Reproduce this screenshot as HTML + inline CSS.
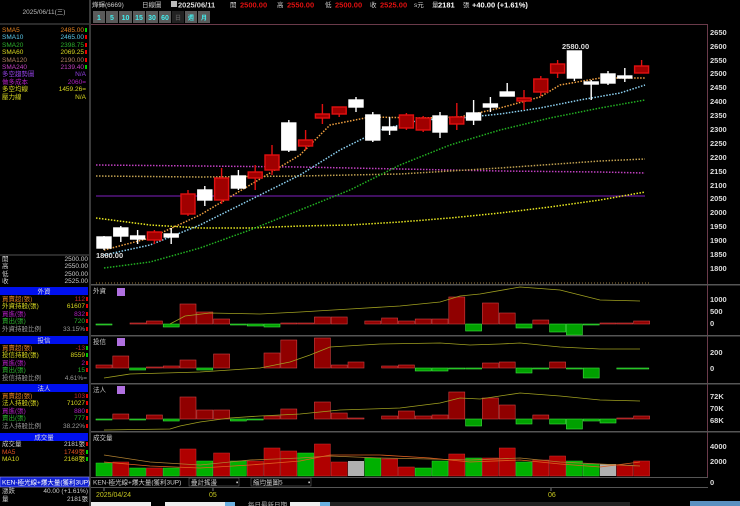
<!DOCTYPE html>
<html><head><meta charset="utf-8"><style>
html,body{margin:0;padding:0;background:#000;width:740px;height:506px;overflow:hidden}
svg{display:block}
text{font-family:"Liberation Sans","Noto Sans CJK TC",sans-serif}
.s{font-size:6.5px}
.a{font-size:7.5px;fill:#ddd;font-weight:bold}
</style></head><body>
<svg width="740" height="506" viewBox="0 0 740 506" xmlns="http://www.w3.org/2000/svg">
<rect width="740" height="506" fill="#000"/>
<rect x="89" y="0" width="2" height="506" fill="#3a3a3a"/>
<text x="44" y="14" class="s" fill="#bbb" text-anchor="middle">2025/06/11(三)</text>
<line x1="0" y1="24" x2="89" y2="24" stroke="#555"/>
<g class="s">
<text x="2" y="32" fill="#e08020">SMA5</text><text x="84" y="32" fill="#e08020" text-anchor="end">2485.00</text><rect x="85" y="28" width="2" height="4" fill="#0c0"/>
<text x="2" y="39" fill="#5bc8e8">SMA10</text><text x="84" y="39" fill="#5bc8e8" text-anchor="end">2465.00</text><rect x="85" y="35" width="2" height="4" fill="#e00"/>
<text x="2" y="47" fill="#2cb02c">SMA20</text><text x="84" y="47" fill="#2cb02c" text-anchor="end">2398.75</text><rect x="85" y="43" width="2" height="4" fill="#e00"/>
<text x="2" y="54" fill="#d8d820">SMA60</text><text x="84" y="54" fill="#d8d820" text-anchor="end">2069.25</text><rect x="85" y="50" width="2" height="4" fill="#e00"/>
<text x="2" y="62" fill="#b08060">SMA120</text><text x="84" y="62" fill="#b08060" text-anchor="end">2190.00</text><rect x="85" y="58" width="2" height="4" fill="#e00"/>
<text x="2" y="69" fill="#c040c0">SMA240</text><text x="84" y="69" fill="#c040c0" text-anchor="end">2139.40</text><rect x="85" y="65" width="2" height="4" fill="#0c0"/>
<text x="2" y="76" fill="#9040e0">多空趨勢圖</text><text x="86" y="76" fill="#9040e0" text-anchor="end">N/A</text>
<text x="2" y="84" fill="#b020c0">做多成本</text><text x="86" y="84" fill="#b020c0" text-anchor="end">2060=</text>
<text x="2" y="91" fill="#d8d820">多空均線</text><text x="86" y="91" fill="#d8d820" text-anchor="end">1459.26=</text>
<text x="2" y="99" fill="#d8d820">壓力線</text><text x="86" y="99" fill="#d8d820" text-anchor="end">N/A</text>
</g>
<line x1="0" y1="255" x2="89" y2="255" stroke="#555"/>
<g class="s" fill="#ccc">
<text x="2" y="261">開</text><text x="88" y="261" text-anchor="end">2500.00</text>
<text x="2" y="268">高</text><text x="88" y="268" text-anchor="end">2550.00</text>
<text x="2" y="276">低</text><text x="88" y="276" text-anchor="end">2500.00</text>
<text x="2" y="283">收</text><text x="88" y="283" text-anchor="end">2525.00</text>
</g>
<g class="s">
<rect x="0" y="287" width="88" height="8" fill="#0010ee"/><text x="44" y="293.5" fill="#ddd" text-anchor="middle">外資</text>
<text x="2" y="301" fill="#e08020">買賣超(張)</text><text x="85" y="301" fill="#c03030" text-anchor="end">112</text><rect x="86" y="297" width="2" height="4" fill="#e00"/>
<text x="2" y="308" fill="#d8d820">外資持股(張)</text><text x="85" y="308" fill="#d8d820" text-anchor="end">61607</text><rect x="86" y="304" width="2" height="4" fill="#e00"/>
<text x="2" y="316" fill="#b020c0">買進(張)</text><text x="85" y="316" fill="#b020c0" text-anchor="end">832</text><rect x="86" y="312" width="2" height="4" fill="#e00"/>
<text x="2" y="323" fill="#2cb02c">賣出(張)</text><text x="85" y="323" fill="#2cb02c" text-anchor="end">720</text><rect x="86" y="319" width="2" height="4" fill="#e00"/>
<text x="2" y="331" fill="#999">外資持股比例</text><text x="85" y="331" fill="#999" text-anchor="end">33.15%</text><rect x="86" y="327" width="2" height="4" fill="#e00"/>
<rect x="0" y="336" width="88" height="8" fill="#0010ee"/><text x="44" y="342.5" fill="#ddd" text-anchor="middle">投信</text>
<text x="2" y="350" fill="#e08020">買賣超(張)</text><text x="85" y="350" fill="#c03030" text-anchor="end">-13</text><rect x="86" y="346" width="2" height="4" fill="#0c0"/>
<text x="2" y="357" fill="#d8d820">投信持股(張)</text><text x="85" y="357" fill="#d8d820" text-anchor="end">8559</text><rect x="86" y="353" width="2" height="4" fill="#0c0"/>
<text x="2" y="365" fill="#b020c0">買進(張)</text><text x="85" y="365" fill="#b020c0" text-anchor="end">2</text><rect x="86" y="361" width="2" height="4" fill="#e00"/>
<text x="2" y="372" fill="#2cb02c">賣出(張)</text><text x="85" y="372" fill="#2cb02c" text-anchor="end">15</text><rect x="86" y="368" width="2" height="4" fill="#e00"/>
<text x="2" y="380" fill="#999">投信持股比例</text><text x="87" y="380" fill="#999" text-anchor="end">4.61%=</text>
<rect x="0" y="384" width="88" height="8" fill="#0010ee"/><text x="44" y="390.5" fill="#ddd" text-anchor="middle">法人</text>
<text x="2" y="398" fill="#e08020">買賣超(張)</text><text x="85" y="398" fill="#c03030" text-anchor="end">103</text><rect x="86" y="394" width="2" height="4" fill="#e00"/>
<text x="2" y="405" fill="#d8d820">法人持股(張)</text><text x="85" y="405" fill="#d8d820" text-anchor="end">71027</text><rect x="86" y="401" width="2" height="4" fill="#e00"/>
<text x="2" y="413" fill="#b020c0">買進(張)</text><text x="85" y="413" fill="#b020c0" text-anchor="end">880</text><rect x="86" y="409" width="2" height="4" fill="#e00"/>
<text x="2" y="420" fill="#2cb02c">賣出(張)</text><text x="85" y="420" fill="#2cb02c" text-anchor="end">777</text><rect x="86" y="416" width="2" height="4" fill="#e00"/>
<text x="2" y="428" fill="#999">法人持股比例</text><text x="85" y="428" fill="#999" text-anchor="end">38.22%</text><rect x="86" y="424" width="2" height="4" fill="#e00"/>
<rect x="0" y="433" width="88" height="8" fill="#0010ee"/><text x="44" y="439.5" fill="#ddd" text-anchor="middle">成交量</text>
<text x="2" y="446" fill="#ccc">成交量</text><text x="85" y="446" fill="#ccc" text-anchor="end">2181張</text><rect x="86" y="442" width="2" height="4" fill="#e00"/>
<text x="2" y="454" fill="#e05020">MA5</text><text x="85" y="454" fill="#e05020" text-anchor="end">1749張</text><rect x="86" y="450" width="2" height="4" fill="#0c0"/>
<text x="2" y="461" fill="#d8d820">MA10</text><text x="85" y="461" fill="#d8d820" text-anchor="end">2168張</text><rect x="86" y="457" width="2" height="4" fill="#0c0"/>
<rect x="0" y="477" width="89" height="10" fill="#1020d0" stroke="#99f" stroke-width="0.6"/><text x="2" y="484.5" fill="#fff">KEN-極光線+爆大量(獲利3UP)</text>
<text x="2" y="493" fill="#ccc">漲跌</text><text x="88" y="493" fill="#ccc" text-anchor="end">40.00 (+1.61%)</text>
<text x="2" y="501" fill="#ccc">量</text><text x="88" y="501" fill="#ccc" text-anchor="end">2181張</text>
</g>
<g class="s" fill="#ccc">
<text x="92" y="7">燁輝(6669)</text><text x="142" y="7">日線圖</text>
</g>
<rect x="171" y="1" width="6" height="6" fill="#bbb"/>
<text x="178" y="7.5" class="a" fill="#fff">2025/06/11</text>
<text x="230" y="7" class="s" fill="#ccc">開</text><text x="240" y="7.5" class="a" style="fill:#e01010">2500.00</text>
<text x="277" y="7" class="s" fill="#ccc">高</text><text x="287" y="7.5" class="a" style="fill:#e01010">2550.00</text>
<text x="325" y="7" class="s" fill="#ccc">低</text><text x="335" y="7.5" class="a" style="fill:#e01010">2500.00</text>
<text x="370" y="7" class="s" fill="#ccc">收</text><text x="380" y="7.5" class="a" style="fill:#e01010">2525.00</text>
<text x="414" y="7" class="s" fill="#ccc">s元</text><text x="432" y="7" class="s" fill="#ccc">量</text>
<text x="438" y="7.5" class="a" style="fill:#fff">2181</text><text x="463" y="7" class="s" fill="#ccc">張</text>
<text x="472" y="7.5" class="a" style="fill:#fff">+40.00 (+1.61%)</text>
<g font-size="7" font-weight="bold">
<rect x="93" y="11" width="12" height="12" fill="#5a5a5a"/><text x="99" y="20" fill="#4ee" text-anchor="middle">1</text>
<rect x="106" y="11" width="12" height="12" fill="#5a5a5a"/><text x="112" y="20" fill="#4ee" text-anchor="middle">5</text>
<rect x="119" y="11" width="13" height="12" fill="#5a5a5a"/><text x="125.5" y="20" fill="#4ee" text-anchor="middle">10</text>
<rect x="133" y="11" width="12" height="12" fill="#5a5a5a"/><text x="139" y="20" fill="#4ee" text-anchor="middle">15</text>
<rect x="146" y="11" width="12" height="12" fill="#5a5a5a"/><text x="152" y="20" fill="#4ee" text-anchor="middle">30</text>
<rect x="159" y="11" width="12" height="12" fill="#5a5a5a"/><text x="165" y="20" fill="#4ee" text-anchor="middle">60</text>
<rect x="172" y="11" width="12" height="12" fill="#222"/><text x="178" y="20" fill="#555" text-anchor="middle" font-size="6">日</text>
<rect x="185" y="11" width="12" height="12" fill="#5a5a5a"/><text x="191" y="20" fill="#4ee" text-anchor="middle" font-size="6">週</text>
<rect x="198" y="11" width="12" height="12" fill="#5a5a5a"/><text x="204" y="20" fill="#4ee" text-anchor="middle" font-size="6">月</text>
</g>
<line x1="91" y1="24.5" x2="708" y2="24.5" stroke="#6a3a4a"/>
<line x1="707.5" y1="24" x2="707.5" y2="477" stroke="#6a3a4a"/>
<g class="a" font-size="7">
<text x="710" y="35">2650</text><text x="710" y="49">2600</text><text x="710" y="63">2550</text><text x="710" y="76">2500</text><text x="710" y="90">2450</text><text x="710" y="104">2400</text><text x="710" y="118">2350</text><text x="710" y="132">2300</text><text x="710" y="146">2250</text><text x="710" y="160">2200</text><text x="710" y="174">2150</text><text x="710" y="188">2100</text><text x="710" y="201">2050</text><text x="710" y="215">2000</text><text x="710" y="229">1950</text><text x="710" y="243">1900</text><text x="710" y="257">1850</text><text x="710" y="271">1800</text>
</g>
<line x1="96" y1="196" x2="645" y2="196" stroke="#8020c0" stroke-width="1"/>
<g fill="none" stroke-width="1.5" stroke-dasharray="1.5,1.5">
<polyline stroke="#c040c0" points="96,165 200,166 300,167 400,169 500,171 600,172 645,173"/>
<polyline stroke="#c0a050" points="96,176 200,177 300,176 400,174 500,168 600,161 645,159"/>
<polyline stroke="#e8e820" points="96,218 150,225 200,228 250,228 300,226 350,225 400,222 450,218 500,213 550,207 600,200 645,192"/>
<polyline stroke="#22b022" points="104,268 150,262 200,248 250,230 300,210 350,190 400,165 450,145 500,130 550,118 600,108 645,100"/>
<polyline stroke="#8cd0f0" points="104,255 150,245 200,225 250,200 300,175 340,150 380,130 420,120 460,118 500,114 540,108 580,100 620,93 645,85"/>
<polyline stroke="#f0a040" points="104,250 150,238 200,215 250,185 300,155 330,125 370,117 420,118 460,117 500,108 540,97 560,85 600,78 645,78"/>
</g>
<g stroke-width="1.4">
<g stroke="#fff" fill="#fff">
<line x1="104" y1="236" x2="104" y2="250"/><rect x="97" y="237" width="14" height="11"/>
<line x1="120.8" y1="226" x2="120.8" y2="242"/><rect x="113.8" y="228" width="14" height="8"/>
<line x1="137.6" y1="230" x2="137.6" y2="244"/><rect x="130.6" y="236" width="14" height="3"/>
<line x1="171.2" y1="228" x2="171.2" y2="244"/><rect x="164.2" y="234" width="14" height="3"/>
<line x1="204.8" y1="186" x2="204.8" y2="206"/><rect x="197.8" y="190" width="14" height="10"/>
<line x1="238.4" y1="170" x2="238.4" y2="190"/><rect x="231.4" y="176" width="14" height="12"/>
<line x1="288.8" y1="120" x2="288.8" y2="152"/><rect x="281.8" y="123" width="14" height="27"/>
<line x1="356" y1="97" x2="356" y2="112"/><rect x="349" y="100" width="14" height="7"/>
<line x1="372.8" y1="112" x2="372.8" y2="142"/><rect x="365.8" y="115" width="14" height="25"/>
<line x1="389.6" y1="117" x2="389.6" y2="135"/><rect x="382.6" y="127" width="14" height="3"/>
<line x1="440" y1="112" x2="440" y2="138"/><rect x="433" y="116" width="14" height="16"/>
<line x1="473.6" y1="100" x2="473.6" y2="125"/><rect x="466.6" y="113" width="14" height="7"/>
<line x1="490.4" y1="97" x2="490.4" y2="112"/><rect x="483.4" y="104" width="14" height="3"/>
<line x1="507.2" y1="83" x2="507.2" y2="96"/><rect x="500.2" y="92" width="14" height="4"/>
<line x1="574.4" y1="51" x2="574.4" y2="81"/><rect x="567.4" y="51" width="14" height="27"/>
<line x1="591.2" y1="80" x2="591.2" y2="100"/><rect x="584.2" y="82" width="14" height="2"/>
<line x1="608" y1="71" x2="608" y2="85"/><rect x="601" y="74" width="14" height="9"/>
<line x1="624.8" y1="68" x2="624.8" y2="82"/><rect x="617.8" y="76" width="14" height="2"/>
</g>
<g stroke="#e01010" fill="#a00000">
<line x1="154.4" y1="230" x2="154.4" y2="244"/><rect x="147.4" y="232" width="14" height="8"/>
<line x1="188" y1="190" x2="188" y2="216"/><rect x="181" y="194" width="14" height="20"/>
<line x1="221.6" y1="168" x2="221.6" y2="204"/><rect x="214.6" y="178" width="14" height="22"/>
<line x1="255.2" y1="165" x2="255.2" y2="190"/><rect x="248.2" y="172" width="14" height="6"/>
<line x1="272" y1="145" x2="272" y2="175"/><rect x="265" y="155" width="14" height="15"/>
<line x1="305.6" y1="130" x2="305.6" y2="150"/><rect x="298.6" y="140" width="14" height="6"/>
<line x1="322.4" y1="104" x2="322.4" y2="124"/><rect x="315.4" y="114" width="14" height="4"/>
<line x1="339.2" y1="107" x2="339.2" y2="117"/><rect x="332.2" y="107" width="14" height="7"/>
<line x1="406.4" y1="113" x2="406.4" y2="130"/><rect x="399.4" y="115" width="14" height="13"/>
<line x1="423.2" y1="116" x2="423.2" y2="132"/><rect x="416.2" y="118" width="14" height="12"/>
<line x1="456.8" y1="103" x2="456.8" y2="130"/><rect x="449.8" y="117" width="14" height="7"/>
<line x1="524" y1="90" x2="524" y2="110"/><rect x="517" y="98" width="14" height="3"/>
<line x1="540.8" y1="76" x2="540.8" y2="96"/><rect x="533.8" y="79" width="14" height="13"/>
<line x1="557.6" y1="60" x2="557.6" y2="78"/><rect x="550.6" y="64" width="14" height="9"/>
<line x1="641.6" y1="60" x2="641.6" y2="73"/><rect x="634.6" y="66" width="14" height="7"/>
</g>
</g>
<text x="562" y="49" class="a" font-size="7">2580.00</text>
<text x="96" y="258" class="a" font-size="7">1860.00</text>
<line x1="96" y1="283" x2="650" y2="283" stroke="#a08040" stroke-dasharray="1,2"/>
<g fill="#555"><rect x="91" y="284" width="649" height="1.5"/><rect x="91" y="335" width="649" height="1.5"/><rect x="91" y="383" width="649" height="1.5"/><rect x="91" y="431" width="649" height="1.5"/><rect x="91" y="477" width="617" height="1"/><rect x="91" y="487" width="617" height="1"/></g>
<g class="s" fill="#ccc"><text x="93" y="293">外資</text><text x="93" y="344">投信</text><text x="93" y="392">法人</text><text x="93" y="440">成交量</text></g>
<rect x="117" y="288" width="8" height="8" fill="#b070e0"/><rect x="117" y="338" width="8" height="8" fill="#b070e0"/><rect x="117" y="386" width="8" height="8" fill="#b070e0"/>
<g class="a" font-size="7">
<text x="710" y="302">1000</text><text x="710" y="314">500</text><text x="710" y="326">0</text>
<text x="710" y="355">200</text><text x="710" y="371">0</text>
<text x="710" y="399">72K</text><text x="710" y="411">70K</text><text x="710" y="423">68K</text>
<text x="710" y="449">4000</text><text x="710" y="464">2000</text><text x="710" y="485">0</text>
</g>
<g stroke="#d04040" stroke-width="0.6" fill="#900000">
<rect x="130" y="323" width="16" height="1"/><rect x="146.4" y="321" width="16" height="3"/><rect x="180" y="304" width="16" height="20"/><rect x="196.8" y="312" width="16" height="12"/><rect x="213.6" y="319" width="16" height="5"/><rect x="280.8" y="323" width="16" height="1"/><rect x="297.6" y="323" width="16" height="1"/><rect x="314.4" y="317" width="16" height="7"/><rect x="331.2" y="317" width="16" height="7"/><rect x="364.8" y="321" width="16" height="3"/><rect x="381.6" y="318" width="16" height="6"/><rect x="398.4" y="321" width="16" height="3"/><rect x="415.2" y="319" width="16" height="5"/><rect x="432" y="319" width="16" height="5"/><rect x="448.8" y="297" width="16" height="27"/><rect x="482.4" y="303" width="16" height="21"/><rect x="499.2" y="313" width="16" height="11"/><rect x="532.8" y="320" width="16" height="4"/><rect x="600" y="323" width="16" height="1"/><rect x="633.6" y="321" width="16" height="3"/><rect x="616.8" y="323" width="16" height="1"/>
</g>
<g stroke="#40e040" stroke-width="0.6" fill="#00a000">
<rect x="96" y="324" width="16" height="1"/><rect x="163.2" y="324" width="16" height="3"/><rect x="230.4" y="324" width="16" height="1"/><rect x="247.2" y="324" width="16" height="2"/><rect x="264" y="324" width="16" height="3"/><rect x="465.6" y="324" width="16" height="7"/><rect x="516" y="324" width="16" height="4"/><rect x="549.6" y="324" width="16" height="8"/><rect x="566.4" y="324" width="16" height="11"/><rect x="583.2" y="324" width="16" height="1"/>
</g>
<polyline fill="none" stroke="#a0a020" stroke-width="0.8" points="170,324 185,316 210,313 260,314 300,312 350,309 400,306 440,302 460,296 480,294 520,287 560,290 600,300 640,301"/>
<g stroke="#d04040" stroke-width="0.6" fill="#900000">
<rect x="96" y="365" width="16" height="3"/><rect x="112.8" y="356" width="16" height="12"/><rect x="146.4" y="367" width="16" height="1"/><rect x="163.2" y="366" width="16" height="2"/><rect x="180" y="360" width="16" height="8"/><rect x="213.6" y="354" width="16" height="14"/><rect x="264" y="353" width="16" height="15"/><rect x="280.8" y="340" width="16" height="28"/><rect x="314.4" y="338" width="16" height="30"/><rect x="331.2" y="365" width="16" height="3"/><rect x="348" y="362" width="16" height="6"/><rect x="381.6" y="366" width="16" height="2"/><rect x="398.4" y="365" width="16" height="3"/><rect x="482.4" y="363" width="16" height="5"/><rect x="499.2" y="362" width="16" height="6"/><rect x="549.6" y="362" width="16" height="6"/>
</g>
<g stroke="#40e040" stroke-width="0.6" fill="#00a000">
<rect x="129.6" y="368" width="16" height="2"/><rect x="196.8" y="368" width="16" height="2"/><rect x="415.2" y="368" width="16" height="3"/><rect x="432" y="368" width="16" height="3"/><rect x="448.8" y="368" width="16" height="1"/><rect x="465.6" y="368" width="16" height="1"/><rect x="516" y="368" width="16" height="5"/><rect x="532.8" y="368" width="16" height="1"/><rect x="566.4" y="368" width="16" height="1"/><rect x="583.2" y="368" width="16" height="10"/><rect x="616.8" y="368" width="32" height="1"/>
</g>
<polyline fill="none" stroke="#a0a020" stroke-width="0.8" points="104,378 130,374 200,372 230,370 260,368 290,362 310,355 330,347 380,344 440,343 470,345 500,344 520,343 560,347 600,349 640,349"/>
<g stroke="#d04040" stroke-width="0.6" fill="#900000">
<rect x="112.8" y="414" width="16" height="5"/><rect x="146.4" y="415" width="16" height="4"/><rect x="180" y="397" width="16" height="22"/><rect x="196.8" y="410" width="16" height="9"/><rect x="213.6" y="410" width="16" height="9"/><rect x="264" y="416" width="16" height="3"/><rect x="280.8" y="409" width="16" height="10"/><rect x="314.4" y="402" width="16" height="17"/><rect x="331.2" y="413" width="16" height="6"/><rect x="348" y="418" width="16" height="1"/><rect x="381.6" y="416" width="16" height="3"/><rect x="398.4" y="411" width="16" height="8"/><rect x="415.2" y="416" width="16" height="3"/><rect x="432" y="415" width="16" height="4"/><rect x="448.8" y="392" width="16" height="27"/><rect x="482.4" y="398" width="16" height="21"/><rect x="499.2" y="405" width="16" height="14"/><rect x="532.8" y="415" width="16" height="4"/><rect x="616.8" y="418" width="16" height="1"/><rect x="633.6" y="416" width="16" height="3"/>
</g>
<g stroke="#40e040" stroke-width="0.6" fill="#00a000">
<rect x="96" y="419" width="16" height="1"/><rect x="129.6" y="419" width="16" height="1"/><rect x="163.2" y="419" width="16" height="2"/><rect x="230.4" y="419" width="16" height="2"/><rect x="247.2" y="419" width="16" height="1"/><rect x="465.6" y="419" width="16" height="7"/><rect x="516" y="419" width="16" height="5"/><rect x="549.6" y="419" width="16" height="5"/><rect x="566.4" y="419" width="16" height="10"/><rect x="583.2" y="419" width="16" height="2"/><rect x="600" y="419" width="16" height="4"/>
</g>
<polyline fill="none" stroke="#a0a020" stroke-width="0.8" points="104,430 170,429 180,426 200,422 230,418 260,416 300,414 340,410 400,408 440,403 460,398 480,399 520,393 560,396 600,400 640,401"/>
<g fill="#00b000" stroke="#30d030" stroke-width="0.5">
<rect x="96" y="463" width="16" height="13"/><rect x="129.6" y="468" width="16" height="8"/><rect x="163.2" y="468" width="16" height="8"/><rect x="196.8" y="461" width="16" height="15"/><rect x="230.4" y="461" width="16" height="15"/><rect x="297.6" y="453" width="16" height="23"/><rect x="364.8" y="458" width="16" height="18"/><rect x="415.2" y="468" width="16" height="8"/><rect x="432" y="461" width="16" height="15"/><rect x="465.6" y="458" width="16" height="18"/><rect x="516" y="462" width="16" height="14"/><rect x="566.4" y="461" width="16" height="15"/><rect x="583.2" y="464" width="16" height="12"/>
</g>
<g fill="#b00000" stroke="#d03030" stroke-width="0.5">
<rect x="112.8" y="462" width="16" height="14"/><rect x="146.4" y="468" width="16" height="8"/><rect x="180" y="449" width="16" height="27"/><rect x="213.6" y="453" width="16" height="23"/><rect x="247.2" y="461" width="16" height="15"/><rect x="264" y="448" width="16" height="28"/><rect x="280.8" y="451" width="16" height="25"/><rect x="314.4" y="444" width="16" height="32"/><rect x="331.2" y="462" width="16" height="14"/><rect x="381.6" y="459" width="16" height="17"/><rect x="398.4" y="467" width="16" height="9"/><rect x="448.8" y="454" width="16" height="22"/><rect x="482.4" y="458" width="16" height="18"/><rect x="499.2" y="448" width="16" height="28"/><rect x="532.8" y="460" width="16" height="16"/><rect x="549.6" y="456" width="16" height="20"/><rect x="616.8" y="465" width="16" height="11"/><rect x="633.6" y="461" width="16" height="15"/>
</g>
<g fill="#b0b0b0"><rect x="348" y="461" width="16" height="15"/><rect x="600" y="464" width="16" height="12"/></g>
<polyline fill="none" stroke="#b08030" stroke-width="0.8" points="104,455 150,462 200,465 250,460 300,458 330,456 380,458 430,459 470,460 520,458 560,462 600,464 640,466"/>
<polyline fill="none" stroke="#e06020" stroke-width="0.8" points="104,462 150,466 200,468 250,465 300,461 330,455 380,455 430,458 470,462 520,460 560,464 600,467 640,462"/>
<g class="s">
<text x="93" y="484.5" fill="#ccc">KEN-極光線+爆大量(獲利3UP)</text>
<rect x="189" y="478" width="50" height="8" fill="none" stroke="#666" stroke-width="0.6"/><text x="191" y="484.5" fill="#ccc">疊計搖盪</text><text x="236" y="484.5" fill="#ccc">▪</text>
<rect x="251" y="478" width="60" height="8" fill="none" stroke="#666" stroke-width="0.6"/><text x="253" y="484.5" fill="#ccc">縮均量圖5</text><text x="308" y="484.5" fill="#ccc">▪</text>
</g>
<g stroke="#ccc" stroke-width="0.6"><line x1="104" y1="488" x2="104" y2="491"/><line x1="213" y1="488" x2="213" y2="491"/><line x1="551" y1="488" x2="551" y2="491"/></g>
<g font-size="7" fill="#c8c820"><text x="96" y="497">2025/04/24</text><text x="209" y="497">05</text><text x="548" y="497">06</text></g>
<rect x="91" y="502" width="60" height="4" fill="#eee"/><rect x="165" y="502" width="60" height="4" fill="#eee"/><rect x="225" y="502" width="10" height="4" fill="#6ab0e0"/>
<text x="248" y="507" class="s" fill="#bbb">每日最新日期</text><rect x="290" y="502" width="30" height="4" fill="#eee"/><rect x="320" y="502" width="10" height="4" fill="#6ab0e0"/>
<rect x="330" y="502" width="300" height="4" fill="#222"/>
<rect x="690" y="501" width="50" height="5" fill="#5a90c0"/>
</svg>
</body></html>
